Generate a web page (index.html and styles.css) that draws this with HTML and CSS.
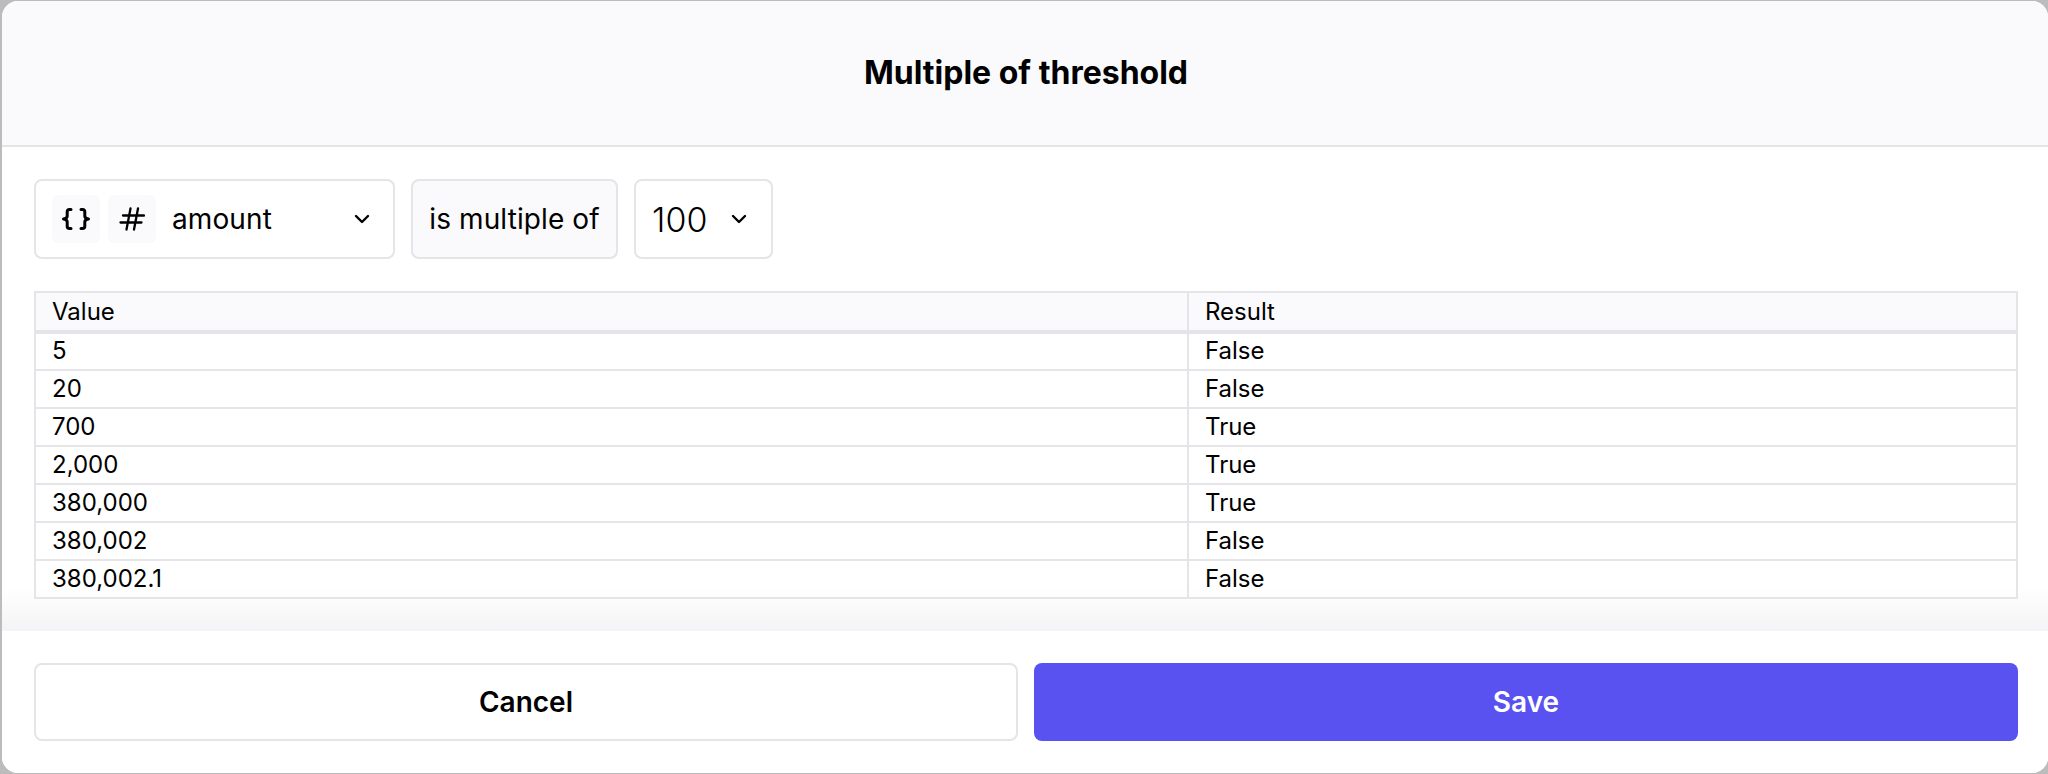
FILE: index.html
```html
<html>
	<head>
		<link rel="stylesheet" href="styles.css">
	</head>
	<body>
		<div class="modal">
			<div class="modalHeader">Multiple of threshold</div>

			<div class="modalBody">
				<div class="filaCondicion">
					<div class="campo campoVariable">
						<span class="icono">
							<svg width="30" height="24" viewBox="0 0 30 24" fill="none" stroke="#000" stroke-width="3" stroke-linecap="round" stroke-linejoin="round">
								<path d="M10 2.5H8.5C7 2.5 6.2 3.3 6.2 4.8V9C6.2 10.6 5 11.6 2.5 12C5 12.4 6.2 13.4 6.2 15V19.2C6.2 20.7 7 21.5 8.5 21.5H10"/>
								<path d="M20 2.5H21.5C23 2.5 23.8 3.3 23.8 4.8V9C23.8 10.6 25 11.6 27.5 12C25 12.4 23.8 13.4 23.8 15V19.2C23.8 20.7 23 21.5 21.5 21.5H20"/>
							</svg>
						</span>
						<span class="icono">
							<svg width="26" height="24" viewBox="0 0 26 24" fill="none" stroke="#000" stroke-width="2.3" stroke-linecap="round">
								<path d="M4 8.5H25M1.5 15.5H22.5M11.5 1.5L7.5 22.5M19 1.5L15 22.5"/>
							</svg>
						</span>
						<span class="campoTexto">amount</span>
						<svg class="flecha" width="16" height="10" viewBox="0 0 16 10" fill="none" stroke="#000" stroke-width="2.4" stroke-linecap="round" stroke-linejoin="round">
							<path d="M2 2L8 8L14 2"/>
						</svg>
					</div>
					<div class="campo campoOperador">is multiple of</div>
					<div class="campo campoValor">
						<span class="valorTexto">100</span>
						<svg class="flecha" width="16" height="10" viewBox="0 0 16 10" fill="none" stroke="#000" stroke-width="2.4" stroke-linecap="round" stroke-linejoin="round">
							<path d="M2 2L8 8L14 2"/>
						</svg>
					</div>
				</div>

				<table class="tabla">
					<thead>
						<tr><th class="colValor">Value</th><th>Result</th></tr>
					</thead>
					<tbody>
						<tr><td>5</td><td>False</td></tr>
						<tr><td>20</td><td>False</td></tr>
						<tr><td>700</td><td>True</td></tr>
						<tr><td>2,000</td><td>True</td></tr>
						<tr><td>380,000</td><td>True</td></tr>
						<tr><td>380,002</td><td>False</td></tr>
						<tr><td>380,002.1</td><td>False</td></tr>
					</tbody>
				</table>
			</div>

			<div class="modalFooter">
				<button class="boton botonCancelar">Cancel</button>
				<button class="boton botonGuardar">Save</button>
			</div>
		</div>
	</body>
</html>
```

FILE: styles.css
```css
html, body {
	margin: 0;
	height: 100%;
	background-color: #bcbcbc;
	font-family: Inter, "Liberation Sans", sans-serif;
	color: #000;
	overflow: hidden;
}

.modal {
	box-sizing: border-box;
	width: 2046px;
	height: 772px;
	margin: 1px 0 0 2px;
	background-color: #fff;
	border-radius: 16px;
	overflow: hidden;
	display: flex;
	flex-direction: column;
}

.modalHeader {
	height: 146px;
	box-sizing: border-box;
	padding: 0 0 2px 2px;
	border-bottom: 2px solid #e4e4e9;
	background-color: #fafafc;
	display: flex;
	align-items: center;
	justify-content: center;
	font-size: 32px;
	font-weight: 700;
}

.modalBody {
	flex: 1;
	padding: 32px 30px 0 32px;
	background: linear-gradient(to bottom, #fff 0, #fff 440px, #f4f4f6 100%);
}

.filaCondicion {
	display: flex;
	gap: 16px;
}

.campo {
	box-sizing: border-box;
	height: 80px;
	border: 2px solid #e4e4e9;
	border-radius: 8px;
	background-color: #fff;
	display: flex;
	align-items: center;
	font-size: 28px;
	letter-spacing: 0.1px;
}

.campoVariable {
	width: 361px;
	padding: 0 23px 0 16px;
	gap: 8px;
}

.icono {
	width: 48px;
	height: 48px;
	border-radius: 6px;
	background-color: #fafafc;
	display: flex;
	align-items: center;
	justify-content: center;
}

.campoTexto {
	flex: 1;
	margin-left: 8px;
}

.campoOperador {
	width: 207px;
	justify-content: center;
	background-color: #fafafc;
}

.campoValor {
	width: 139px;
	padding: 0 24px 0 16px;
	justify-content: space-between;
}

.valorTexto {
	font-size: 34px;
	font-weight: 300;
}

.tabla {
	width: 1984px;
	margin-top: 32px;
	border-collapse: collapse;
	border: 2px solid #e4e4e9;
	font-size: 24px;
	table-layout: fixed;
}

.tabla th, .tabla td {
	height: 38px;
	box-sizing: border-box;
	padding: 0 16px;
	border: 2px solid #e4e4e9;
	text-align: left;
	font-weight: 400;
}

.tabla td {
	padding-bottom: 2px;
}

.tabla th {
	height: 40px;
	background-color: #fafafc;
	border-bottom-width: 4px;
}

.colValor {
	width: 1153px;
}

.modalFooter {
	height: 142px;
	box-sizing: border-box;
	padding: 32px 30px 32px 32px;
	display: grid;
	grid-template-columns: 1fr 1fr;
	gap: 16px;
	background-color: #fff;
}

.boton {
	height: 78px;
	border-radius: 8px;
	font-family: inherit;
	font-size: 28px;
	font-weight: 600;
}

.botonCancelar {
	border: 2px solid #e4e4e9;
	background-color: #fff;
	color: #000;
}

.botonGuardar {
	border: 0;
	background-color: #5952f1;
	color: #fff;
}
```
